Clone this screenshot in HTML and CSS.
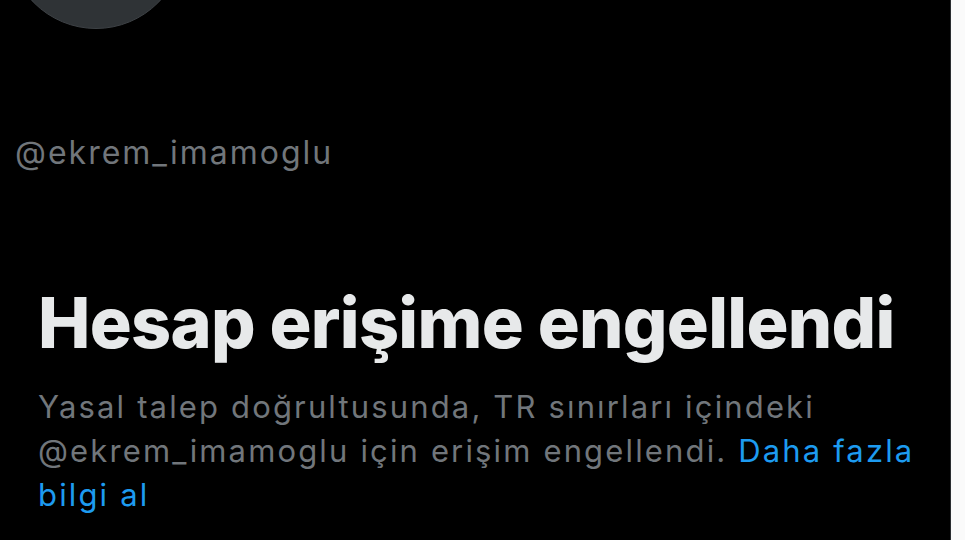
FILE: index.html
```html
<!DOCTYPE html>
<html lang="tr">
<head>
<meta charset="UTF-8" />
<meta name="viewport" content="width=device-width, initial-scale=1.0"/>
<title>@ekrem_imamoglu</title>
<link rel="stylesheet" href="styles.css">
</head>
<body>

<div class="screen">
<div class="profile">
<div class="avatar"></div>
<div class="handle">@ekrem_imamoglu</div>

<div class="withheld">
<h1>Hesap erişime engellendi</h1>
<p>Yasal talep doğrultusunda, TR sınırları içindeki @ekrem_imamoglu için erişim engellendi. <a href="#">Daha fazla bilgi al</a></p>
</div>
</div>
<div class="edge"></div>
</div>

</body>
</html>
```

FILE: styles.css
```css
* { box-sizing: border-box; }
body {
margin: 0;
padding: 0;
background-color: #fff;
font-family: 'Inter', 'Noto Sans', sans-serif;
overflow: hidden;
}
.screen {
display: flex;
height: 540px;
}
.profile {
width: 951px;
background-color: #000;
border-right: 1px solid #2a2d30;
overflow: hidden;
}
.edge {
flex: 1;
background-color: #fafafa;
}
.avatar {
width: 176px;
height: 176px;
margin: -147px 0 0 8px;
border-radius: 50%;
background-color: #2f3336;
border: 1px solid #3e4246;
}
.handle {
margin: 104px 0 0 15px;
font-size: 32px;
line-height: 40px;
letter-spacing: 2px;
color: #71767b;
}
.withheld {
padding: 0 30px 0 38px;
margin-top: 110px;
}
h1 {
margin: 0;
font-size: 70px;
font-weight: 800;
line-height: 80px;
color: #e7e9ea;
letter-spacing: -0.7px;
}
p {
margin: 22px 0 0;
font-size: 31px;
line-height: 44px;
letter-spacing: 2.15px;
color: #71767b;
}
a {
color: #1d9bf0;
text-decoration: none;
}
```
